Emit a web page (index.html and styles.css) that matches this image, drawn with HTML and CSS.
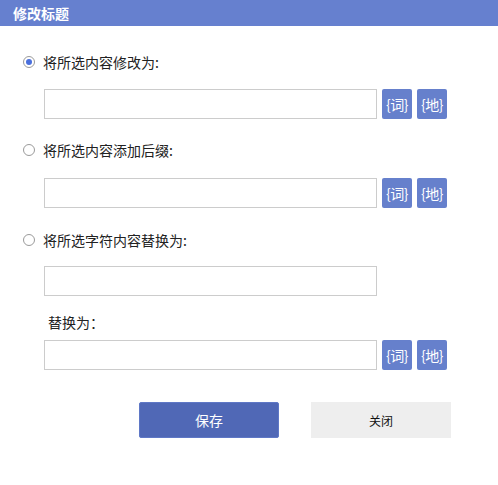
FILE: index.html
```html
<!DOCTYPE html>
<html lang="zh">
<head>
<meta charset="utf-8">
<title>修改标题</title>
<link rel="stylesheet" href="styles.css">
</head>
<body>
<div class="header">修改标题</div>
<div class="form">
  <label class="radio-row r1"><span class="radio checked"></span><span class="radio-text">将所选内容修改为:</span></label>
  <div class="input-row i1">
    <input class="text-input" type="text">
    <span class="tag">{词}</span><span class="tag">{地}</span>
  </div>
  <label class="radio-row r2"><span class="radio"></span><span class="radio-text">将所选内容添加后缀:</span></label>
  <div class="input-row i2">
    <input class="text-input" type="text">
    <span class="tag">{词}</span><span class="tag">{地}</span>
  </div>
  <label class="radio-row r3"><span class="radio"></span><span class="radio-text">将所选字符内容替换为:</span></label>
  <div class="input-row i3">
    <input class="text-input" type="text">
  </div>
  <div class="sub-label">替换为：</div>
  <div class="input-row i4">
    <input class="text-input" type="text">
    <span class="tag">{词}</span><span class="tag">{地}</span>
  </div>
  <div class="actions">
    <button class="btn btn-save">保存</button>
    <button class="btn btn-close">关闭</button>
  </div>
</div>
</body>
</html>
```
FILE: styles.css
```css
html, body {
  margin: 0;
  padding: 0;
  background: #fff;
  font-family: "Noto Sans CJK SC", "Noto Sans", sans-serif;
  color: #222;
}
.header {
  height: 26px;
  line-height: 26px;
  background: #6680cf;
  color: #fff;
  font-size: 14px;
  font-weight: bold;
  padding-left: 13px;
}
.form {
  display: flex;
  flex-direction: column;
}
.radio-row {
  display: flex;
  align-items: center;
  height: 20px;
  padding-left: 23px;
  font-size: 14px;
}
.radio {
  width: 10px;
  height: 10px;
  border: 1px solid #9a9a9a;
  border-radius: 50%;
  display: flex;
  align-items: center;
  justify-content: center;
  margin-right: 8px;
  background: #fff;
}
.radio.checked::after {
  content: "";
  width: 6px;
  height: 6px;
  border-radius: 50%;
  background: #4a6fdc;
}
.radio-text {
  line-height: 20px;
}
.r1 { margin-top: 26px; }
.i1 { margin-top: 17px; }
.r2 { margin-top: 21px; }
.i2 { margin-top: 18px; }
.r3 { margin-top: 22px; }
.i3 { margin-top: 16px; }
.i4 { margin-top: 8px; }
.input-row {
  display: flex;
  align-items: center;
  gap: 5px;
  padding-left: 44px;
  height: 30px;
}
.text-input {
  box-sizing: border-box;
  width: 333px;
  height: 30px;
  border: 1px solid #cccccc;
  margin: 0;
  padding: 0 6px;
  outline: none;
}
.tag {
  width: 30px;
  height: 30px;
  background: #6680cc;
  color: #fff;
  border-radius: 2px;
  font-size: 14px;
  display: flex;
  align-items: center;
  justify-content: center;
  letter-spacing: -0.5px;
}
.sub-label {
  margin-top: 16px;
  padding-left: 48px;
  height: 20px;
  line-height: 20px;
  font-size: 14px;
}
.actions {
  display: flex;
  gap: 32px;
  padding-left: 139px;
  margin-top: 32px;
}
.btn {
  box-sizing: border-box;
  width: 140px;
  height: 36px;
  font-family: "Noto Sans CJK SC", "Noto Sans", sans-serif;
  cursor: pointer;
  margin: 0;
}
.btn-save {
  background: #5068b6;
  border: 1px solid #5f78c6;
  border-radius: 2px;
  color: #fff;
  font-size: 14px;
}
.btn-close {
  background: #eeeeee;
  border: none;
  color: #111;
  font-size: 12px;
}
```
